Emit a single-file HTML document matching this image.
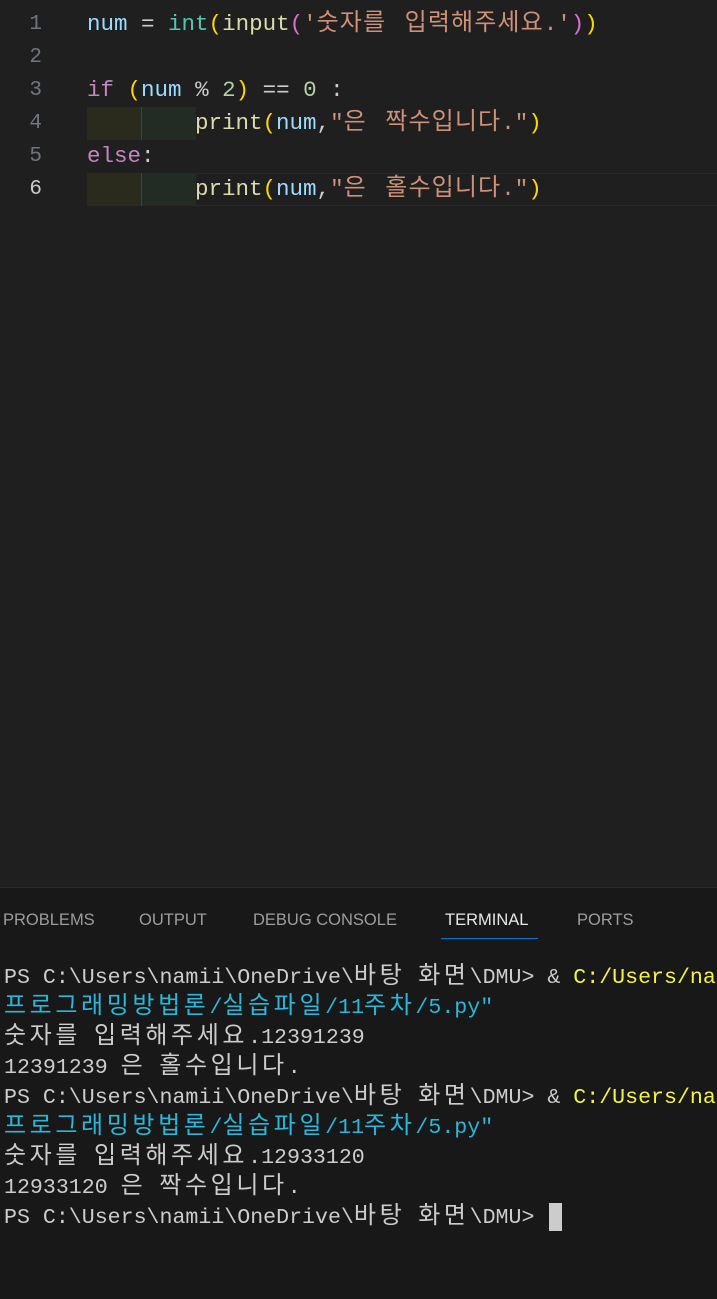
<!DOCTYPE html>
<html><head><meta charset="utf-8"><style>
body{margin:0;width:717px;height:1298px;background:#1f1f1f;overflow:hidden;position:relative;font-family:"Liberation Mono","Noto Sans CJK KR",monospace}
.ln{position:absolute;left:0;width:42px;text-align:right;color:#6e7681;font-size:21px;line-height:33px}
.code{position:absolute;left:87px;font-size:22.5px;line-height:33px;white-space:pre;color:#cccccc}
.code .ko{letter-spacing:1.1px;font-size:24px}
.v{color:#9cdcfe}.f{color:#dcdcaa}.c{color:#4ec9b0}.s{color:#ce9178;word-spacing:5px}.k{color:#c586c0}.n{color:#b5cea8}.y{color:#ffd700}.p{color:#da70d6}
.ind{position:absolute;height:33px}
#term{position:absolute;left:0;top:887px;width:717px;height:411px;background:#181818;border-top:1px solid #2b2b2b;overflow:hidden}
.tab{position:absolute;top:23px;font-family:"Liberation Sans",sans-serif;font-size:16.5px;color:#9d9d9d}
.t{position:absolute;left:4px;font-size:21.6px;line-height:30px;white-space:pre;color:#cccccc}
.t .ko{letter-spacing:3.6px;font-size:24px}
.tl{color:#f5f543}.tb{color:#29b8db}
</style></head><body>
<div class="ln" style="top:8px">1</div>
<div class="ln" style="top:41px">2</div>
<div class="ln" style="top:74px">3</div>
<div class="ln" style="top:107px">4</div>
<div class="ln" style="top:140px">5</div>
<div class="ln" style="top:173px;color:#cccccc">6</div>
<div style="position:absolute;left:87px;right:0;top:173px;height:31px;border-top:1px solid #282828;border-bottom:1px solid #282828"></div>
<div class="ind" style="left:87px;top:107px;width:54px;background:#2a2a1d"></div>
<div class="ind" style="left:141px;top:107px;width:54px;background:#222b24;border-left:1px solid #404040"></div>
<div class="ind" style="left:87px;top:173px;width:54px;background:#2a2a1d"></div>
<div class="ind" style="left:141px;top:173px;width:54px;background:#222b24;border-left:1px solid #404040"></div>
<div class="code" style="top:8px"><span class="v">num</span> = <span class="c">int</span><span class="y">(</span><span class="f">input</span><span class="p">(</span><span class="s">'<span class="ko">숫자를</span> <span class="ko">입력해주세요</span>.'</span><span class="p">)</span><span class="y">)</span></div>
<div class="code" style="top:74px"><span class="k">if</span> <span class="y">(</span><span class="v">num</span> % <span class="n">2</span><span class="y">)</span> == <span class="n">0</span> :</div>
<div class="code" style="top:107px;left:195px"><span class="f">print</span><span class="y">(</span><span class="v">num</span>,<span class="s">"<span class="ko">은</span> <span class="ko">짝수입니다</span>."</span><span class="y">)</span></div>
<div class="code" style="top:140px"><span class="k">else</span>:</div>
<div class="code" style="top:173px;left:195px"><span class="f">print</span><span class="y">(</span><span class="v">num</span>,<span class="s">"<span class="ko">은</span> <span class="ko">홀수입니다</span>."</span><span class="y">)</span></div>
<div id="term">
<div class="tab" style="left:3px">PROBLEMS</div>
<div class="tab" style="left:139px">OUTPUT</div>
<div class="tab" style="left:253px">DEBUG CONSOLE</div>
<div class="tab" style="left:445px;color:#e7e7e7">TERMINAL</div>
<div class="tab" style="left:577px">PORTS</div>
<div style="position:absolute;left:441px;top:50px;width:97px;height:1px;background:#0078d4"></div>
<div class="t" style="top:75px">PS C:\Users\namii\OneDrive\<span class="ko">바탕</span> <span class="ko">화면</span>\DMU&gt; &amp; <span class="tl">C:/Users/namii/</span></div>
<div class="t tb" style="top:105px"><span class="ko">프로그래밍방법론</span>/<span class="ko">실습파일</span>/11<span class="ko">주차</span>/5.py"</div>
<div class="t" style="top:135px"><span class="ko">숫자를</span> <span class="ko">입력해주세요</span>.12391239</div>
<div class="t" style="top:165px">12391239 <span class="ko">은</span> <span class="ko">홀수입니다</span>.</div>
<div class="t" style="top:195px">PS C:\Users\namii\OneDrive\<span class="ko">바탕</span> <span class="ko">화면</span>\DMU&gt; &amp; <span class="tl">C:/Users/namii/</span></div>
<div class="t tb" style="top:225px"><span class="ko">프로그래밍방법론</span>/<span class="ko">실습파일</span>/11<span class="ko">주차</span>/5.py"</div>
<div class="t" style="top:255px"><span class="ko">숫자를</span> <span class="ko">입력해주세요</span>.12933120</div>
<div class="t" style="top:285px">12933120 <span class="ko">은</span> <span class="ko">짝수입니다</span>.</div>
<div class="t" style="top:315px">PS C:\Users\namii\OneDrive\<span class="ko">바탕</span> <span class="ko">화면</span>\DMU&gt; </div>
<div style="position:absolute;left:549px;top:315px;width:13px;height:28px;background:#cccccc"></div>
</div>
</body></html>
